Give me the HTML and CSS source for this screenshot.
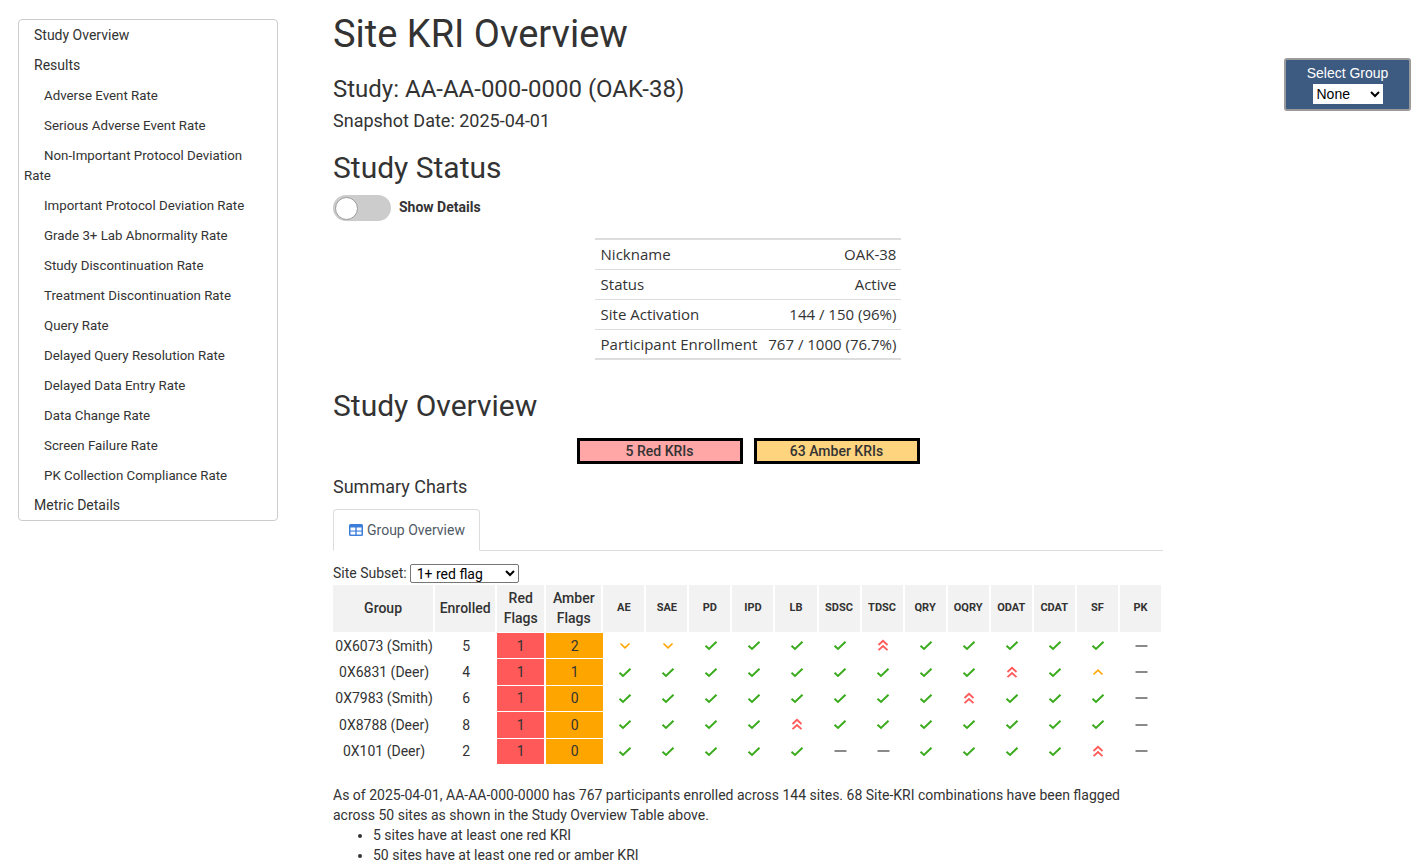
FILE: index.html
```html
<!DOCTYPE html>
<html>
<head>
<meta charset="utf-8">
<link rel="stylesheet" href="styles.css">
</head>
<body>
<div class="page">
  <nav class="toc">
    <div class="toc-item top">Study Overview</div>
    <div class="toc-item top results">Results</div>
    <div class="toc-item sub">Adverse Event Rate</div>
    <div class="toc-item sub">Serious Adverse Event Rate</div>
    <div class="toc-item sub">Non-Important Protocol Deviation Rate</div>
    <div class="toc-item sub">Important Protocol Deviation Rate</div>
    <div class="toc-item sub">Grade 3+ Lab Abnormality Rate</div>
    <div class="toc-item sub">Study Discontinuation Rate</div>
    <div class="toc-item sub">Treatment Discontinuation Rate</div>
    <div class="toc-item sub">Query Rate</div>
    <div class="toc-item sub">Delayed Query Resolution Rate</div>
    <div class="toc-item sub">Delayed Data Entry Rate</div>
    <div class="toc-item sub">Data Change Rate</div>
    <div class="toc-item sub">Screen Failure Rate</div>
    <div class="toc-item sub">PK Collection Compliance Rate</div>
    <div class="toc-item top last">Metric Details</div>
  </nav>

  <main class="main">
    <h1 class="title">Site KRI Overview</h1>
    <div class="study">Study: AA-AA-000-0000 (OAK-38)</div>
    <div class="snapshot">Snapshot Date: 2025-04-01</div>
    <h2 class="section status-head">Study Status</h2>
    <div class="toggle-row">
      <span class="toggle"><span class="knob"></span></span>
      <span class="toggle-label">Show Details</span>
    </div>
    <table class="status">
      <tr><td>Nickname</td><td class="r">OAK-38</td></tr>
      <tr><td>Status</td><td class="r">Active</td></tr>
      <tr><td>Site Activation</td><td class="r">144 / 150 (96%)</td></tr>
      <tr><td>Participant Enrollment</td><td class="r">767 / 1000 (76.7%)</td></tr>
    </table>

    <h2 class="section overview-head">Study Overview</h2>
    <div class="badges">
      <div class="badge red">5 Red KRIs</div>
      <div class="badge amber">63 Amber KRIs</div>
    </div>
    <div class="summary">Summary Charts</div>
    <div class="tabs">
      <div class="tab">
        <svg class="tab-icon" width="14" height="12" viewBox="0 0 14 12"><rect x="0" y="0" width="14" height="12" rx="1.5" fill="#3b7dd8"/><rect x="1.5" y="3.5" width="4.8" height="3" fill="#fff"/><rect x="7.7" y="3.5" width="4.8" height="3" fill="#fff"/><rect x="1.5" y="7.6" width="4.8" height="3" fill="#fff"/><rect x="7.7" y="7.6" width="4.8" height="3" fill="#fff"/></svg>
        Group Overview
      </div>
    </div>
    <div class="subset">
      <label>Site Subset:</label>
      <select class="subset-select"><option>1+ red flag</option></select>
    </div>

    <table class="grid">
      <colgroup>
        <col class="c-group"><col class="c-enr"><col class="c-red"><col class="c-amb">
        <col class="c-k"><col class="c-k"><col class="c-k"><col class="c-k"><col class="c-k"><col class="c-k"><col class="c-k"><col class="c-k"><col class="c-k"><col class="c-k"><col class="c-k"><col class="c-k"><col class="c-k">
      </colgroup>
      <thead>
        <tr>
          <th class="big">Group</th><th class="big">Enrolled</th><th class="big">Red<br>Flags</th><th class="big">Amber<br>Flags</th>
          <th>AE</th><th>SAE</th><th>PD</th><th>IPD</th><th>LB</th><th>SDSC</th><th>TDSC</th><th>QRY</th><th>OQRY</th><th>ODAT</th><th>CDAT</th><th>SF</th><th>PK</th>
        </tr>
      </thead>
      <tbody id="rows"></tbody>
    </table>

    <p class="desc">As of 2025-04-01, AA-AA-000-0000 has 767 participants enrolled across 144 sites. 68 Site-KRI combinations have been flagged across 50 sites as shown in the Study Overview Table above.</p>
    <ul class="desc-list">
      <li>5 sites have at least one red KRI</li>
      <li>50 sites have at least one red or amber KRI</li>
    </ul>
  </main>

  <aside class="group-wrap">
    <div class="group-box">
      <div class="group-label">Select Group</div>
      <select class="group-select"><option>None</option></select>
    </div>
  </aside>
</div>
<script src="app.js"></script>
</body>
</html>
```

FILE: app.js
```js
var icons = {
  c: '<svg width="14" height="11" viewBox="0 0 14 11"><path d="M1.5 5.8 L5 9 L12.5 1.8" fill="none" stroke="#3aab1c" stroke-width="2"/></svg>',
  d: '<svg width="12" height="8" viewBox="0 0 12 8"><path d="M1.5 1.5 L6 5.8 L10.5 1.5" fill="none" stroke="#ffa500" stroke-width="1.6"/></svg>',
  u: '<svg width="12" height="8" viewBox="0 0 12 8"><path d="M1.5 6.5 L6 2.2 L10.5 6.5" fill="none" stroke="#ffa500" stroke-width="1.6"/></svg>',
  r: '<svg width="12" height="13" viewBox="0 0 12 13"><path d="M1.5 6 L6 1.8 L10.5 6 M1.5 11.2 L6 7 L10.5 11.2" fill="none" stroke="#ff5a5a" stroke-width="1.8"/></svg>',
  n: '<svg width="13" height="4" viewBox="0 0 13 4"><path d="M0.5 2 H12.5" fill="none" stroke="#8a8a8a" stroke-width="2"/></svg>'
};
var data = [
  ["0X6073 (Smith)", 5, 1, 2, "ddccccrcccccn"],
  ["0X6831 (Deer)", 4, 1, 1, "cccccccccrcun"],
  ["0X7983 (Smith)", 6, 1, 0, "ccccccccrcccn"],
  ["0X8788 (Deer)", 8, 1, 0, "ccccrcccccccn"],
  ["0X101 (Deer)", 2, 1, 0, "cccccnnccccrn"]
];
var html = "";
data.forEach(function (d) {
  var row = '<tr><td>' + d[0] + '</td><td>' + d[1] + '</td><td class="rf">' + d[2] + '</td><td class="af">' + d[3] + '</td>';
  for (var i = 0; i < d[4].length; i++) {
    row += '<td class="ic">' + icons[d[4][i]] + '</td>';
  }
  html += row + '</tr>';
});
document.getElementById("rows").innerHTML = html;
```

FILE: styles.css
```css
* { box-sizing: border-box; }
body {
  margin: 0;
  font-family: Roboto, "Noto Sans", sans-serif;
  color: #333;
  background: #fff;
}
.page {
  display: flex;
  align-items: flex-start;
}
.toc {
  margin: 19px 0 0 18px;
  width: 260px;
  flex: none;
  border: 1px solid #ccc;
  border-radius: 4px;
  padding: 0 15px 0 5px;
  color: #333;
}
.toc-item {
  line-height: 20px;
  padding: 5px 0;
}
.toc-item.top { font-size: 14px; text-indent: 10px; }
.toc-item.results { padding-bottom: 6px; }
.toc-item.sub { font-size: 13.3px; text-indent: 20px; }
.toc-item.last { padding-top: 4px; padding-bottom: 5px; }

.main {
  margin-left: 55px;
  width: 830px;
  flex: none;
}
.title {
  font-size: 38px;
  line-height: 48px;
  font-weight: 400;
  margin: 10px 0 0;
}
.study {
  font-size: 24px;
  line-height: 28px;
  margin-top: 17px;
}
.snapshot {
  font-size: 18px;
  line-height: 22px;
  margin-top: 7px;
}
.section {
  font-size: 30px;
  line-height: 34px;
  font-weight: 400;
  margin: 0;
}
.status-head { margin-top: 19px; }
.toggle-row {
  display: flex;
  align-items: center;
  margin-top: 10px;
  height: 26px;
}
.toggle {
  width: 58px;
  height: 26px;
  border-radius: 13px;
  background: #ccc;
  display: flex;
  align-items: center;
  padding-left: 2px;
}
.knob {
  width: 23px;
  height: 23px;
  border-radius: 50%;
  background: #fff;
  border: 1px solid #9a9a9a;
}
.toggle-label {
  margin-left: 8px;
  font-size: 14px;
  font-weight: 700;
  margin-top: -2px;
}
.status {
  margin: 17px auto 0;
  border-collapse: collapse;
  font-family: "Open Sans", sans-serif;
  font-size: 15px;
  border-top: 2px solid #ddd;
  border-bottom: 2px solid #ddd;
}
.status td {
  height: 30px;
  padding: 0 5px 0 6px;
  border-top: 1px solid #ddd;
  white-space: nowrap;
}
.status td.r { text-align: right; }
.overview-head { margin-top: 29px; }
.badges {
  display: flex;
  justify-content: center;
  gap: 11px;
  margin-top: 15px;
}
.badge {
  width: 166px;
  height: 26px;
  border: 3px solid #000;
  text-align: center;
  font-size: 14px;
  font-weight: 500;
  line-height: 20px;
}
.badge.red { background: #ffa6a6; }
.badge.amber { background: #ffd47f; }
.summary {
  font-size: 18px;
  line-height: 22px;
  margin-top: 12px;
}
.tabs {
  margin-top: 11px;
  border-bottom: 1px solid #ddd;
  display: flex;
}
.tab {
  margin-bottom: -1px;
  width: 147px;
  height: 42px;
  border: 1px solid #ddd;
  border-bottom-color: #fff;
  border-radius: 4px 4px 0 0;
  background: #fff;
  color: #505a66;
  font-size: 14px;
  display: flex;
  align-items: center;
  padding-left: 15px;
  padding-bottom: 1px;
  gap: 4px;
}
.tab-icon { margin-top: 1px; }
.subset {
  margin-top: 12px;
  display: flex;
  align-items: center;
  font-size: 14px;
  height: 20px;
}
.subset-select {
  margin-left: 3px;
  width: 109px;
  height: 19px;
  font-family: Roboto, sans-serif;
  font-size: 14px;
  color: #000;
  border: 1px solid #767676;
  border-radius: 2px;
  background: #fff;
  padding: 0 0 0 2px;
}
.grid {
  margin-top: 2px;
  width: 830px;
  table-layout: fixed;
  border-collapse: separate;
  border-spacing: 0;
  text-align: center;
  font-size: 14px;
}
.c-group { width: 102px; }
.c-enr { width: 62px; }
.c-red { width: 49px; }
.c-amb { width: 57px; }
.c-k { width: 43px; }
.grid th {
  background: #f2f2f2;
  background-clip: padding-box;
  height: 48px;
  font-size: 11px;
  font-weight: 700;
  color: #333;
  border-right: 2px solid #fff;
  border-bottom: 1px solid #fff;
  padding: 0 0 2px;
}
.grid th.big {
  font-size: 14px;
  font-weight: 500;
  line-height: 20px;
}
.grid td {
  height: 26.4px;
  padding: 0;
  border-bottom: 1px solid #fff;
  vertical-align: middle;
  background-clip: padding-box;
}
.grid td.rf { background-color: #ff5959; border-right: 2px solid #fff; }
.grid td.af { background-color: #ffa500; }
.grid td.ic svg { display: block; margin: 0 auto; }
.desc {
  margin: 20px 0 0;
  font-size: 14px;
  line-height: 20px;
  letter-spacing: 0;
}
.desc-list {
  margin: 0;
  padding-left: 40px;
  font-size: 14px;
  line-height: 20px;
}
.group-wrap {
  margin-left: auto;
  margin-right: 14px;
  margin-top: 58px;
}
.group-box {
  width: 127px;
  height: 53px;
  background: #3d5a80;
  border: 2px solid #9a9a9a;
  border-radius: 3px;
  text-align: center;
  font-family: "Liberation Sans", Arial, sans-serif;
  color: #fff;
  padding-top: 4px;
}
.group-label {
  font-size: 14px;
  line-height: 18px;
}
.group-select {
  margin-top: 2px;
  width: 70px;
  height: 20px;
  font-family: "Liberation Sans", Arial, sans-serif;
  font-size: 14px;
  border: none;
  border-radius: 0;
  background: #fff;
  color: #000;
}
```
